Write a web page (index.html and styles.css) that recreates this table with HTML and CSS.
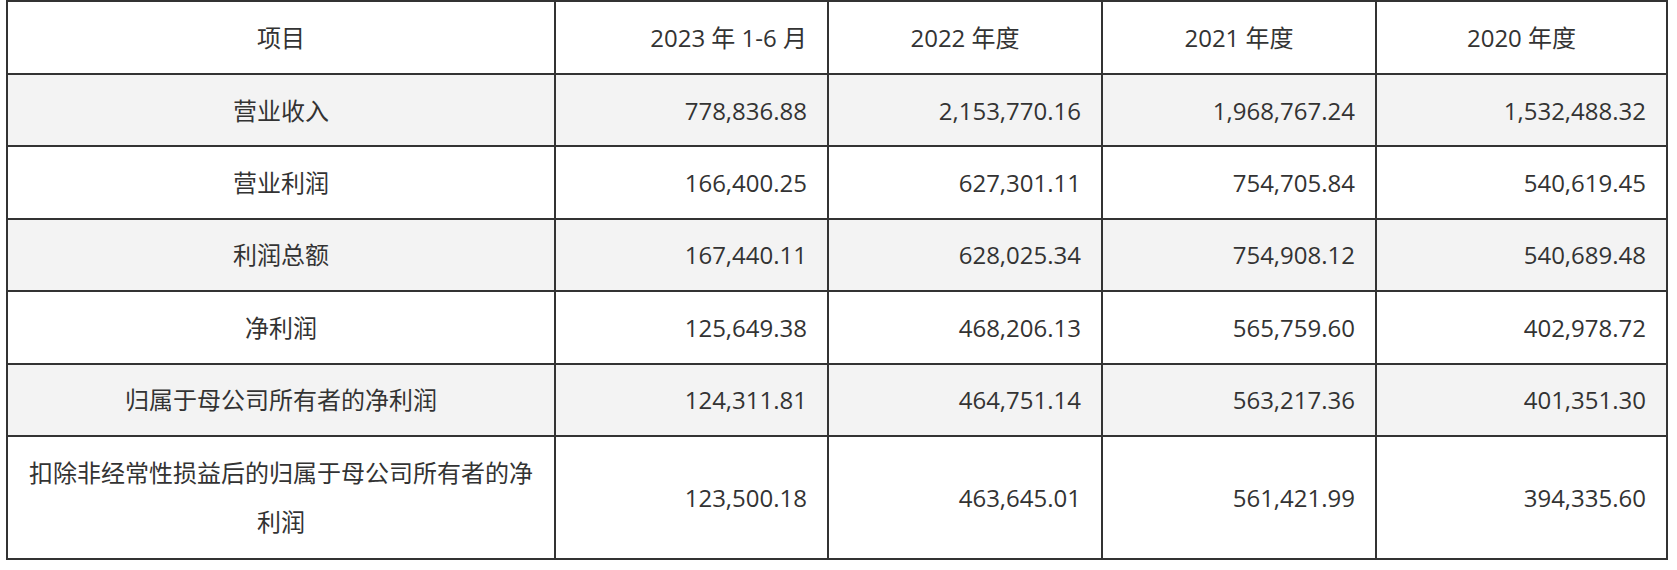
FILE: index.html
```html
<!DOCTYPE html>
<html lang="zh-CN">
<head>
<meta charset="utf-8">
<title>主要财务数据</title>
<link rel="stylesheet" href="styles.css">
</head>
<body>
<div class="wrap">
<table class="fin">
  <colgroup>
    <col class="c-item">
    <col class="c-num">
    <col class="c-num2">
    <col class="c-num2">
    <col class="c-last">
  </colgroup>
  <thead>
    <tr class="head">
      <th class="label">项目</th>
      <th class="num">2023 年 1-6 月</th>
      <th>2022 年度</th>
      <th>2021 年度</th>
      <th>2020 年度</th>
    </tr>
  </thead>
  <tbody>
    <tr class="alt">
      <td class="label">营业收入</td>
      <td class="num">778,836.88</td>
      <td class="num">2,153,770.16</td>
      <td class="num">1,968,767.24</td>
      <td class="num">1,532,488.32</td>
    </tr>
    <tr>
      <td class="label">营业利润</td>
      <td class="num">166,400.25</td>
      <td class="num">627,301.11</td>
      <td class="num">754,705.84</td>
      <td class="num">540,619.45</td>
    </tr>
    <tr class="alt">
      <td class="label">利润总额</td>
      <td class="num">167,440.11</td>
      <td class="num">628,025.34</td>
      <td class="num">754,908.12</td>
      <td class="num">540,689.48</td>
    </tr>
    <tr>
      <td class="label">净利润</td>
      <td class="num">125,649.38</td>
      <td class="num">468,206.13</td>
      <td class="num">565,759.60</td>
      <td class="num">402,978.72</td>
    </tr>
    <tr class="alt">
      <td class="label">归属于母公司所有者的净利润</td>
      <td class="num">124,311.81</td>
      <td class="num">464,751.14</td>
      <td class="num">563,217.36</td>
      <td class="num">401,351.30</td>
    </tr>
    <tr class="tall">
      <td class="label">扣除非经常性损益后的归属于母公司所有者的净利润</td>
      <td class="num">123,500.18</td>
      <td class="num">463,645.01</td>
      <td class="num">561,421.99</td>
      <td class="num">394,335.60</td>
    </tr>
  </tbody>
</table>
</div>
</body>
</html>
```

FILE: styles.css
```css
html, body {
  margin: 0;
  padding: 0;
  background: #ffffff;
}

.wrap {
  padding: 0 0 0 6px;
}

.fin {
  border-collapse: separate;
  border-spacing: 0;
  table-layout: fixed;
  width: 1662px;
  border-top: 2px solid #333333;
  border-left: 2px solid #333333;
  font-family: "Open Sans", "Noto Sans CJK SC", sans-serif;
  font-size: 24px;
  color: #333333;
}

.c-item { width: 548px; }
.c-num { width: 273px; }
.c-num2 { width: 274px; }
.c-last { width: 291px; }

.fin th,
.fin td {
  box-sizing: border-box;
  border-right: 2px solid #333333;
  border-bottom: 2px solid #333333;
  padding: 0 20px;
  line-height: 49px;
  height: 72.4px;
  vertical-align: middle;
  font-weight: normal;
  text-align: center;
}

.fin .head th {
  height: 73px;
}

.fin .tall td {
  height: 123px;
}

.fin .num {
  text-align: right;
}

.fin .label {
  text-align: center;
}

.alt td {
  background: #f3f3f3;
}
```
